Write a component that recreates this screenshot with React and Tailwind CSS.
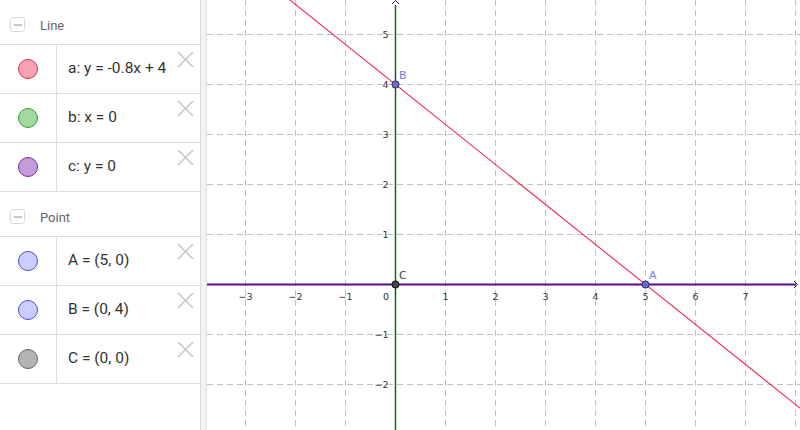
import React from 'react'

const OX = 395.5
const OY = 284.5
const U = 50

const lineItems = [
  { label: 'a: y = -0.8x + 4', fill: '#f7a3b4', stroke: '#e5284c' },
  { label: 'b: x = 0', fill: '#a3d9a1', stroke: '#3a9e36' },
  { label: 'c: y = 0', fill: '#c49cd9', stroke: '#7a2aa3' },
]

const pointItems = [
  { label: 'A = (5, 0)', fill: '#ccccff', stroke: '#4b4bdb' },
  { label: 'B = (0, 4)', fill: '#ccccff', stroke: '#4b4bdb' },
  { label: 'C = (0, 0)', fill: '#b3b3b3', stroke: '#666666' },
]

function GroupHeader({ title }) {
  return (
    <div className="flex items-start pl-[10px] pt-[17px] h-[45px] border-b border-[#dcdcdc]">
      <div className="w-[15px] h-[15px] rounded-[3px] border border-[#dadada] flex items-center justify-center">
        <div className="w-[8px] h-[2px] bg-[#c8c8c8]" />
      </div>
      <span className="ml-[15px] text-[13px] leading-[15px] mt-[1px] text-[#666]">{title}</span>
    </div>
  )
}

function Row({ item }) {
  return (
    <div className="flex h-[49px] border-b border-[#dcdcdc]">
      <div className="w-[57px] border-r border-[#dcdcdc] flex items-center justify-center">
        <div
          className="w-[20px] h-[20px] rounded-full border"
          style={{ background: item.fill, borderColor: item.stroke }}
        />
      </div>
      <div className="flex-1 flex items-center pl-[11px] text-[15.5px] text-[#333]">
        {item.label}
      </div>
      <div className="self-start mt-[6px] mr-[6px] w-[17px] h-[17px]">
        <svg width="17" height="17" viewBox="0 0 17 17">
          <path d="M1 1 L16 16 M16 1 L1 16" stroke="#c8c8c8" strokeWidth="1.6" fill="none" />
        </svg>
      </div>
    </div>
  )
}

function Graph() {
  const vx = []
  for (let x = 245.5; x <= 800; x += U) if (x !== OX) vx.push(x)
  const hy = []
  for (let y = 34.5; y <= 430; y += U) if (y !== OY) hy.push(y)
  const xs = [-3, -2, -1, 1, 2, 3, 4, 5, 6, 7]
  const ys = [5, 4, 3, 2, 1, -1, -2]
  const y1 = OY + 0.8 * (207 - OX) - 200
  const y2 = OY + 0.8 * (800 - OX) - 200
  return (
    <svg width="593" height="430" viewBox="207 0 593 430" className="block">
      <g stroke="#c0c0c0" strokeWidth="1" strokeDasharray="6 4">
        {vx.map((x) => (
          <line key={'v' + x} x1={x} y1="0" x2={x} y2="430" />
        ))}
        {hy.map((y) => (
          <line key={'h' + y} x1="207" y1={y} x2="800" y2={y} />
        ))}
      </g>
      <path d="M392 4 L395.5 0.5 L399 4" stroke="#222" strokeWidth="1" fill="none" />
      <path d="M794 281 L797.5 284.5 L794 288" stroke="#222" strokeWidth="1" fill="none" />
      <g fontFamily="'DejaVu Sans', sans-serif" fontSize="9.5" fill="#333">
        {xs.map((v) => (
          <text key={'xl' + v} x={OX + v * U} y="300" textAnchor="middle">
            {v < 0 ? '\u2212' + -v : v}
          </text>
        ))}
        <text x="386" y="300" textAnchor="middle">0</text>
        {ys.map((v) => (
          <text key={'yl' + v} x="388.5" y={OY - v * U + 3.5} textAnchor="end">
            {v < 0 ? '\u2212' + -v : v}
          </text>
        ))}
      </g>
      <line x1={OX} y1="5" x2={OX} y2="430" stroke="#0a6e0a" strokeWidth="1.5" />
      <line x1="207" y1={OY} x2="796" y2={OY} stroke="#560a8c" strokeWidth="2" />
      <line x1="207" y1={y1} x2="800" y2={y2} stroke="#f0284f" strokeWidth="1.1" />
      <circle cx={OX + 5 * U} cy={OY} r="3.6" fill="#6a6ad8" stroke="#2b2b55" strokeWidth="1" />
      <circle cx={OX} cy={OY - 4 * U} r="3.6" fill="#6a6ad8" stroke="#2b2b55" strokeWidth="1" />
      <circle cx={OX} cy={OY} r="3.6" fill="#444" stroke="#111" strokeWidth="1" />
      <g fontFamily="'DejaVu Sans', sans-serif" fontSize="11">
        <text x="649" y="278.5" fill="#7a7af0">A</text>
        <text x="399" y="79" fill="#7a7af0">B</text>
        <text x="399" y="278.5" fill="#444">C</text>
      </g>
    </svg>
  )
}

export default function App() {
  return (
    <div className="flex w-[800px] h-[430px] overflow-hidden bg-white" style={{ fontFamily: 'Roboto, "Noto Sans", sans-serif' }}>
      <aside className="w-[200px] shrink-0 bg-white">
        <GroupHeader title="Line" />
        {lineItems.map((it) => (
          <Row key={it.label} item={it} />
        ))}
        <GroupHeader title="Point" />
        {pointItems.map((it) => (
          <Row key={it.label} item={it} />
        ))}
      </aside>
      <div className="w-[7px] shrink-0 bg-[#f3f3f3] border-x border-[#dcdcdc]" />
      <main className="flex-1 relative">
        <Graph />
      </main>
    </div>
  )
}
